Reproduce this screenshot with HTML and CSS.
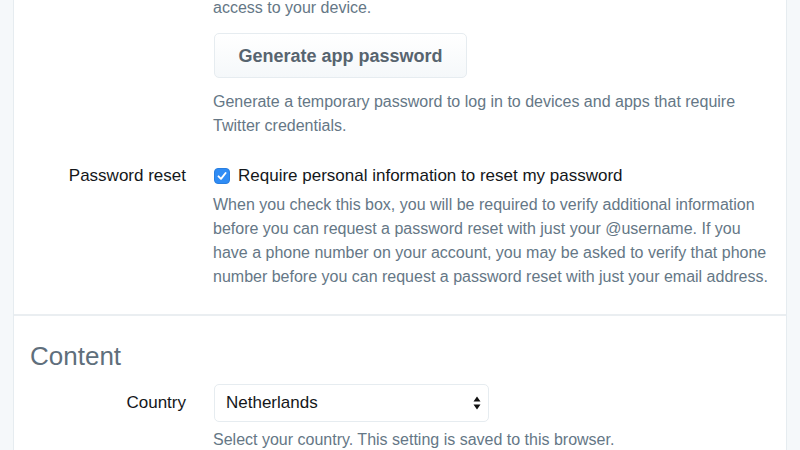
FILE: index.html
```html
<!DOCTYPE html>
<html>
<head>
<meta charset="utf-8">
<link rel="stylesheet" href="styles.css">
</head>
<body>
<div class="panel">
  <section class="section security">
    <div class="row row-app">
      <div class="label"></div>
      <div class="control">
        <p class="help top">access to your device.</p>
        <button class="btn">Generate app password</button>
        <p class="help desc">Generate a temporary password to log in to devices and apps that require<br>Twitter credentials.</p>
      </div>
    </div>
    <div class="row row-reset">
      <div class="label">Password reset</div>
      <div class="control">
        <label class="check">
          <span class="box"><svg width="12" height="12" viewBox="0 0 12 12"><path d="M2.5 6.3 L5 8.8 L9.6 3" fill="none" stroke="#fff" stroke-width="1.9" stroke-linecap="round" stroke-linejoin="round"/></svg></span>
          <span class="check-text">Require personal information to reset my password</span>
        </label>
        <p class="help desc2">When you check this box, you will be required to verify additional information<br>before you can request a password reset with just your @username. If you<br>have a phone number on your account, you may be asked to verify that phone<br>number before you can request a password reset with just your email address.</p>
      </div>
    </div>
  </section>
  <section class="section content">
    <h2 class="heading">Content</h2>
    <div class="row row-country">
      <div class="label">Country</div>
      <div class="control">
        <div class="select">
          <span class="select-text">Netherlands</span>
          <svg class="arrows" width="8" height="14" viewBox="0 0 8 14"><path d="M4 0.5 L7.5 5.5 L0.5 5.5 Z M4 13.5 L7.5 8.5 L0.5 8.5 Z" fill="#111"/></svg>
        </div>
        <p class="help country-help">Select your country. This setting is saved to this browser.</p>
      </div>
    </div>
  </section>
</div>
</body>
</html>
```

FILE: styles.css
```css
html, body {
  margin: 0;
  padding: 0;
}
body {
  background: #f5f8fa;
  font-family: "Liberation Sans", Arial, Helvetica, sans-serif;
  color: #14171a;
  overflow: hidden;
  height: 450px;
}
.panel {
  margin: 0 13px;
  background: #fff;
  border-left: 1px solid #e6ecf0;
  border-right: 1px solid #e6ecf0;
  height: 450px;
}
.section.security {
  padding-bottom: 25px;
  border-bottom: 2px solid #eaeef1;
}
.row {
  display: grid;
  grid-template-columns: 172px 1fr;
  column-gap: 27px;
}
.label {
  text-align: right;
  font-size: 17px;
  line-height: 24px;
}
.control {
  min-width: 0;
}
.help {
  margin: 0;
  font-size: 16px;
  line-height: 24px;
  color: #657786;
}
.top {
  margin-top: -4px;
}
.btn {
  display: block;
  margin-top: 13px;
  margin-left: 1px;
  width: 253px;
  height: 45px;
  border: 1px solid #e6ecf0;
  border-radius: 5px;
  background: linear-gradient(#ffffff, #f5f8fa);
  font-family: "Liberation Sans", Arial, sans-serif;
  font-weight: bold;
  font-size: 18px;
  color: #57646f;
  padding: 2px 0 0 0;
}
.desc {
  margin-top: 12px;
}
.row-reset {
  margin-top: 26px;
}
.check {
  display: flex;
  align-items: center;
  height: 24px;
  gap: 8px;
  padding-left: 1px;
}
.box {
  width: 16px;
  height: 16px;
  border-radius: 4px;
  background: #2f8cf5;
  border: 1px solid #2a7fe0;
  box-sizing: border-box;
  display: flex;
  align-items: center;
  justify-content: center;
}
.check-text {
  font-size: 17px;
  color: #14171a;
}
.desc2 {
  margin-top: 5px;
}
.heading {
  margin: 0;
  padding: 24px 0 0 16px;
  font-weight: normal;
  font-size: 26px;
  line-height: 32px;
  color: #5f6f7c;
}
.row-country {
  margin-top: 12px;
}
.row-country .label {
  line-height: 38px;
}
.select {
  width: 275px;
  height: 38px;
  margin-left: 1px;
  box-sizing: border-box;
  border: 1px solid #e6ecf0;
  border-radius: 5px;
  display: flex;
  align-items: center;
  justify-content: space-between;
  padding: 0 7px 0 11px;
}
.select-text {
  font-size: 17px;
  color: #14171a;
}
.country-help {
  margin-top: 6px;
}
```
